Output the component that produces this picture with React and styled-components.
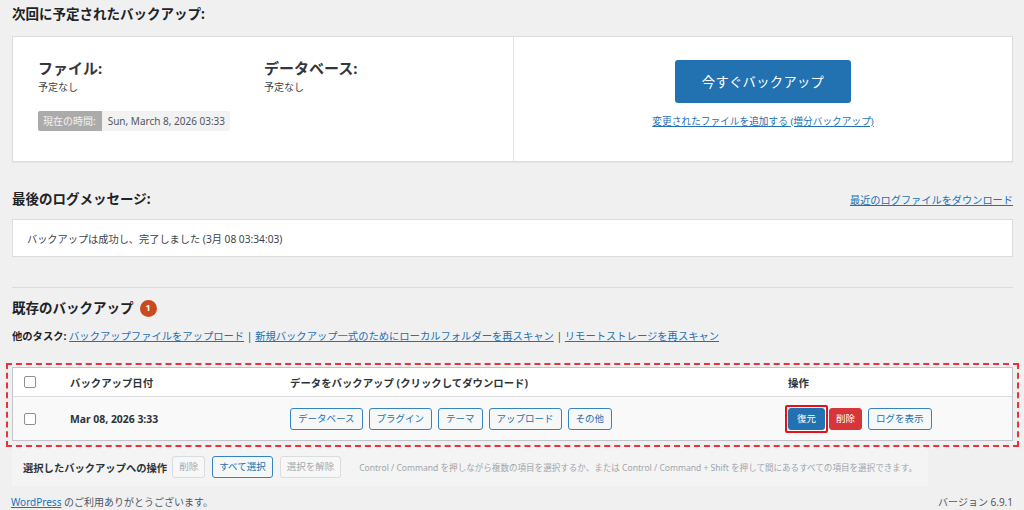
import styled, { createGlobalStyle } from "styled-components";

const GlobalStyle = createGlobalStyle`
  html, body {
    margin: 0;
    padding: 0;
    background: #f0f0f1;
  }
  body {
    font-family: "Noto Sans", "Noto Sans CJK JP", sans-serif;
    font-size: 10.4px;
    color: #3c434a;
  }
  * {
    box-sizing: border-box;
  }
`;

const Page = styled.div`
  width: 1024px;
  height: 510px;
  overflow: hidden;
  padding: 4px 11px 0 12px;
  display: flex;
  flex-direction: column;
`;

const Heading = styled.h2`
  margin: ${(p) => p.$top || 0}px 0 0 0;
  font-size: 13.5px;
  line-height: 20px;
  font-weight: 700;
  color: #1d2327;
  display: flex;
  align-items: center;
  gap: 6px;
`;

const HeadingRow = styled.div`
  margin-top: 27px;
  display: flex;
  justify-content: space-between;
  align-items: center;
  height: 20px;
`;

const Link = styled.a`
  color: #2271b1;
  text-decoration: underline;
  cursor: pointer;
`;

const SmallLink = styled(Link)`
  font-size: 10.2px;
`;

const Panel = styled.div`
  margin-top: 12px;
  height: 126px;
  background: #fff;
  border: 1px solid #dcdcde;
  box-shadow: 0 1px 1px rgba(0, 0, 0, 0.04);
  display: grid;
  grid-template-columns: 501px 1fr;
`;

const Schedule = styled.div`
  padding: 21px 25px 0;
  border-right: 1px solid #e5e5e5;
`;

const ScheduleCols = styled.div`
  display: grid;
  grid-template-columns: 226px 1fr;
`;

const ScheduleTitle = styled.div`
  font-size: 15px;
  font-weight: 700;
  line-height: 20px;
  color: #32373c;
`;

const ScheduleValue = styled.div`
  margin-top: 2px;
  font-size: 10px;
  line-height: 14px;
  color: #3c434a;
`;

const TimeBadge = styled.div`
  margin-top: 17px;
  display: inline-flex;
  height: 20px;
  border-radius: 2px;
  overflow: hidden;
  font-size: 10px;
  line-height: 20px;
  white-space: nowrap;
`;

const TimeLabel = styled.span`
  background: #ababab;
  color: #f2f2f2;
  padding: 0 6px 0 5px;
`;

const TimeValue = styled.span`
  background: #f2f2f2;
  color: #50575e;
  padding: 0 5px 0 6px;
`;

const BackupNow = styled.div`
  display: flex;
  flex-direction: column;
  align-items: center;
  padding-top: 23px;
`;

const BigButton = styled.button`
  width: 176px;
  height: 43px;
  border: none;
  border-radius: 3px;
  background: #2271b1;
  color: #fff;
  font-family: inherit;
  font-size: 13.3px;
  letter-spacing: 0.3px;
`;

const IncrementLink = styled(Link)`
  margin-top: 12px;
  font-size: 9.7px;
  line-height: 14px;
`;

const LogBox = styled.div`
  margin-top: 10px;
  height: 38px;
  background: #fff;
  border: 1px solid #dcdcde;
  padding: 0 14px;
  display: flex;
  align-items: center;
  font-size: 10.2px;
`;

const Rule = styled.hr`
  margin: 30px 0 0;
  border: none;
  border-top: 1px solid #dcdcde;
`;

const CountBadge = styled.span`
  width: 17px;
  height: 17px;
  border-radius: 50%;
  background: #ca4a1f;
  color: #fff;
  font-size: 9px;
  font-weight: 700;
  display: inline-flex;
  align-items: center;
  justify-content: center;
`;

const Tasks = styled.div`
  margin-top: 10px;
  font-size: 10.3px;
  line-height: 16px;
  color: #3c434a;
  white-space: nowrap;
  b {
    color: #1d2327;
  }
`;

const Highlight = styled.div`
  margin: 19px -6px 0;
  border: 2px dashed #e8323d;
  padding: 2px 4px 4px;
`;

const Table = styled.div`
  border: 1px solid #c3c4c7;
  background: #fff;
`;

const Row = styled.div`
  display: grid;
  grid-template-columns: 45px 220px 498px 1fr;
  align-items: center;
  height: ${(p) => p.$h}px;
  background: ${(p) => (p.$alt ? "#f9f9f9" : "#fff")};
  border-top: ${(p) => (p.$alt ? "1px solid #dcdcde" : "none")};
`;

const Cell = styled.div`
  padding-left: ${(p) => (p.$check ? 11 : 12)}px;
  font-weight: ${(p) => (p.$bold ? 700 : 400)};
  color: ${(p) => (p.$bold ? "#2c3338" : "inherit")};
  font-size: 10.4px;
  display: flex;
  align-items: center;
  gap: ${(p) => p.$gap || 6}px;
  white-space: nowrap;
`;

const Check = styled.span`
  width: 12px;
  height: 12px;
  border: 1px solid #8c8f94;
  border-radius: 2px;
  background: #fff;
  display: inline-block;
`;

const Button = styled.button`
  height: 22px;
  padding: 0 ${(p) => p.$pad || 7}px;
  border-radius: 3px;
  font-family: inherit;
  font-size: 9.5px;
  line-height: 20px;
  white-space: nowrap;
  border: 1px solid
    ${(p) =>
      p.$kind === "primary"
        ? "#2271b1"
        : p.$kind === "danger"
        ? "#d63638"
        : p.$kind === "disabled"
        ? "#dcdcde"
        : "#3582c4"};
  background: ${(p) =>
    p.$kind === "primary"
      ? "#2271b1"
      : p.$kind === "danger"
      ? "#d63638"
      : "#f6f7f7"};
  color: ${(p) =>
    p.$kind === "primary" || p.$kind === "danger"
      ? "#fff"
      : p.$kind === "disabled"
      ? "#a7aaad"
      : "#2271b1"};
`;

const Outlined = styled.span`
  display: inline-flex;
  padding: 1px;
  border: 2px solid #e3121b;
  border-radius: 2px;
  margin-left: -3px;
  margin-right: -5px;
`;

const BulkBar = styled.div`
  margin-top: 1px;
  width: 916px;
  height: 38px;
  background: #f4f4f4;
  display: flex;
  align-items: center;
  padding-left: 11px;
  gap: 7px;
  white-space: nowrap;
`;

const BulkTitle = styled.span`
  font-weight: 700;
  font-size: 10.3px;
  color: #2c3338;
  margin-right: -2px;
`;

const Hint = styled.span`
  margin-left: 11px;
  font-size: 8.55px;
  color: #a0a5aa;
`;

const Footer = styled.div`
  margin-top: 8px;
  display: flex;
  justify-content: space-between;
  font-size: 10px;
  line-height: 16px;
  color: #50575e;
  margin-left: -1px;
`;

const dataButtons = ["データベース", "プラグイン", "テーマ", "アップロード", "その他"];

export default function App() {
  return (
    <>
      <GlobalStyle />
      <Page>
        <Heading>次回に予定されたバックアップ:</Heading>
        <Panel>
          <Schedule>
            <ScheduleCols>
              <div>
                <ScheduleTitle>ファイル:</ScheduleTitle>
                <ScheduleValue>予定なし</ScheduleValue>
              </div>
              <div>
                <ScheduleTitle>データベース:</ScheduleTitle>
                <ScheduleValue>予定なし</ScheduleValue>
              </div>
            </ScheduleCols>
            <TimeBadge>
              <TimeLabel>現在の時間:</TimeLabel>
              <TimeValue>Sun, March 8, 2026 03:33</TimeValue>
            </TimeBadge>
          </Schedule>
          <BackupNow>
            <BigButton>今すぐバックアップ</BigButton>
            <IncrementLink>変更されたファイルを追加する (増分バックアップ)</IncrementLink>
          </BackupNow>
        </Panel>

        <HeadingRow>
          <Heading>最後のログメッセージ:</Heading>
          <SmallLink>最近のログファイルをダウンロード</SmallLink>
        </HeadingRow>
        <LogBox>バックアップは成功し、完了しました (3月 08 03:34:03)</LogBox>

        <Rule />
        <Heading $top={10}>
          既存のバックアップ <CountBadge>1</CountBadge>
        </Heading>
        <Tasks>
          <b>他のタスク:</b> <Link>バックアップファイルをアップロード</Link> |{" "}
          <Link>新規バックアップ一式のためにローカルフォルダーを再スキャン</Link> |{" "}
          <Link>リモートストレージを再スキャン</Link>
        </Tasks>

        <Highlight>
          <Table>
            <Row $h={28}>
              <Cell $check>
                <Check />
              </Cell>
              <Cell $bold>バックアップ日付</Cell>
              <Cell $bold>データをバックアップ (クリックしてダウンロード)</Cell>
              <Cell $bold>操作</Cell>
            </Row>
            <Row $h={44} $alt>
              <Cell $check>
                <Check />
              </Cell>
              <Cell $bold>Mar 08, 2026 3:33</Cell>
              <Cell>
                {dataButtons.map((label) => (
                  <Button key={label}>{label}</Button>
                ))}
              </Cell>
              <Cell $gap={6}>
                <Outlined>
                  <Button $kind="primary" $pad={8}>
                    復元
                  </Button>
                </Outlined>
                <Button $kind="danger" $pad={6}>
                  削除
                </Button>
                <Button>ログを表示</Button>
              </Cell>
            </Row>
          </Table>
        </Highlight>

        <BulkBar>
          <BulkTitle>選択したバックアップへの操作</BulkTitle>
          <Button $kind="disabled" $pad={6}>
            削除
          </Button>
          <Button $pad={6}>すべて選択</Button>
          <Button $kind="disabled" $pad={6}>
            選択を解除
          </Button>
          <Hint>
            Control / Command を押しながら複数の項目を選択するか、または Control / Command + Shift
            を押して間にあるすべての項目を選択できます。
          </Hint>
        </BulkBar>

        <Footer>
          <span>
            <Link>WordPress</Link> のご利用ありがとうございます。
          </span>
          <span>バージョン 6.9.1</span>
        </Footer>
      </Page>
    </>
  );
}
